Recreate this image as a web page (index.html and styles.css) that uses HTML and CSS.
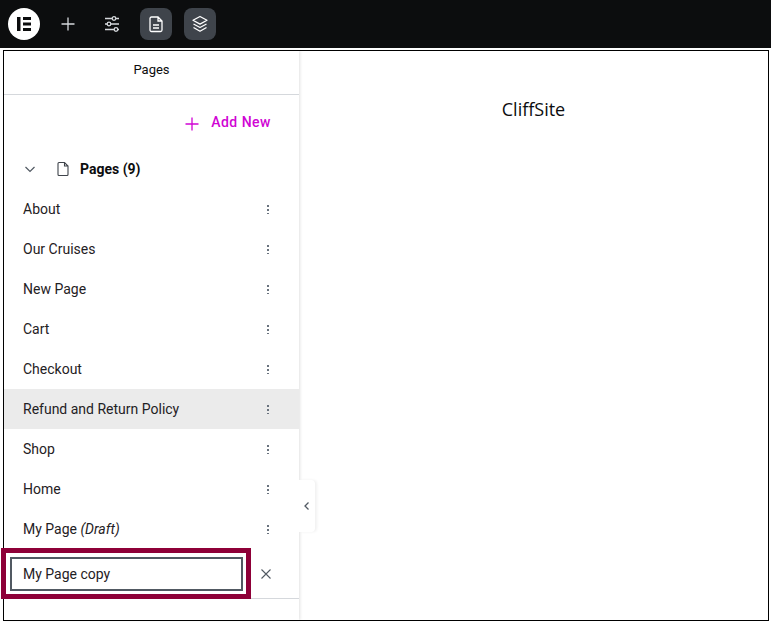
FILE: index.html
```html
<!DOCTYPE html>
<html lang="en">
<head>
  <meta charset="UTF-8">
  <title>Pages</title>
  <link rel="stylesheet" href="styles.css">
</head>
<body>

  <header class="topbar">
    <div class="logo">
      <svg width="32" height="32" viewBox="0 0 32 32"><circle cx="16" cy="16" r="16" fill="#fff"/><path d="M9 9h3.5v14H9zM15 9h8v3h-8zM15 14.500h8v3h-8zM15 20h8v3h-8z" fill="#0c0d0e"/></svg>
    </div>
    <div class="tool">
      <svg width="20" height="20" viewBox="0 0 20 20" fill="none" stroke="#d5d8dc" stroke-width="1.300"><path d="M10 3.500v13M3.500 10h13"/></svg>
    </div>
    <div class="tool">
      <svg width="20" height="20" viewBox="0 0 20 20" fill="none" stroke="#d5d8dc" stroke-width="1.300"><path d="M3 4.500h7M14 4.500h3M3 10h2M9 10h8M3 15.500h9M16 15.500h1"/><circle cx="12" cy="4.500" r="1.800"/><circle cx="7" cy="10" r="1.800"/><circle cx="14" cy="15.500" r="1.800"/></svg>
    </div>
    <div class="tool on">
      <svg width="20" height="20" viewBox="0 0 20 20" fill="none" stroke="#fff" stroke-width="1.300"><path d="M5.500 3h6.500l4 4v9a1.500 1.500 0 0 1-1.500 1.500h-9A1.500 1.500 0 0 1 4 16V4.500A1.500 1.500 0 0 1 5.500 3zM12 3v4h4M7 11h6M7 14h6"/></svg>
    </div>
    <div class="tool on">
      <svg width="20" height="20" viewBox="0 0 20 20" fill="none" stroke="#fff" stroke-width="1.300" stroke-linejoin="round"><path d="M10 2.500l7 3.800-7 3.800-7-3.800zM3.500 10l6.500 3.500 6.500-3.500M3.500 13.500l6.500 3.700 6.500-3.700"/></svg>
    </div>
  </header>

  <div class="frame">
    <aside class="sidebar">
      <div class="side-title">Pages</div>

      <div class="add-row">
        <a class="add-new">
          <svg width="18" height="18" viewBox="0 0 18 18" fill="none" stroke="#d004d4" stroke-width="1.300"><path d="M9 2.500v13M2.500 9h13"/></svg>
          <span>Add New</span>
        </a>
      </div>

      <div class="group-head">
        <svg class="chev" width="14" height="14" viewBox="0 0 14 14" fill="none" stroke="#515962" stroke-width="1.200"><path d="M2.500 5l4.500 4.500L11.500 5"/></svg>
        <svg class="page-ico" width="16" height="16" viewBox="0 0 16 16" fill="none" stroke="#3f444b" stroke-width="1.100"><path d="M4 1.500h5.500L13 5v8.500a1 1 0 0 1-1 1H4a1 1 0 0 1-1-1v-11a1 1 0 0 1 1-1zM9.500 1.500V5H13"/></svg>
        <strong>Pages (9)</strong>
      </div>

      <ul class="pages">
        <li>About<i class="dots"></i></li>
        <li>Our Cruises<i class="dots"></i></li>
        <li>New Page<i class="dots"></i></li>
        <li>Cart<i class="dots"></i></li>
        <li>Checkout<i class="dots"></i></li>
        <li class="active">Refund and Return Policy<i class="dots"></i></li>
        <li>Shop<i class="dots"></i></li>
        <li>Home<i class="dots"></i></li>
        <li><span>My Page <em>(Draft)</em></span><i class="dots"></i></li>
      </ul>

      <div class="rename-row">
        <div class="rename-input">My Page copy</div>
        <svg width="12" height="12" viewBox="0 0 12 12" fill="none" stroke="#515962" stroke-width="1.100"><path d="M1.500 1.500l9 9M10.500 1.500l-9 9"/></svg>
      </div>

      <div class="highlight"></div>
      <div class="collapse">
        <svg width="8" height="10" viewBox="0 0 8 10" fill="none" stroke="#515962" stroke-width="1.300"><path d="M5.500 1.500L2 5l3.500 3.500"/></svg>
      </div>
    </aside>

    <main class="canvas">
      <h1>CliffSite</h1>
    </main>
  </div>

</body>
</html>
```

FILE: styles.css
```css
* {
  box-sizing: border-box;
}

html, body {
  height: 100%;
}

body {
  margin: 0;
  background: #fff;
  font-family: Roboto, 'Liberation Sans', sans-serif;
  color: #0c0d0e;
  overflow: hidden;
}

/* barre du haut */
.topbar {
  height: 48px;
  background: #0c0d0e;
  display: flex;
  align-items: center;
  padding-left: 8px;
  gap: 12px;
}

.logo {
  width: 32px;
  height: 32px;
  margin-right: 0;
}

.tool {
  width: 32px;
  height: 32px;
  border-radius: 8px;
  display: flex;
  justify-content: center;
  align-items: center;
}

.tool.on {
  background: #3f444b;
}

.frame {
  margin: 2px 2px 0 3px;
  height: 571px;
  border: 1px solid #000;
  display: flex;
}

.sidebar {
  position: relative;
  width: 295px;
  flex: none;
  box-shadow: 1px 0 3px rgba(0, 0, 0, 0.12);
  z-index: 1;
  background: #fff;
}

.side-title {
  height: 44px;
  border-bottom: 1px solid #d5d8dc;
  display: flex;
  justify-content: center;
  align-items: center;
  font-size: 13px;
  padding-bottom: 6px;
}

.add-row {
  height: 54px;
  display: flex;
  justify-content: flex-end;
  align-items: center;
  padding: 0 28px 0 0;
}

.add-new {
  display: flex;
  align-items: center;
  gap: 10px;
  color: #d004d4;
  font-size: 14px;
  font-weight: 500;
  letter-spacing: 0.5px;
}

.add-new svg {
  margin-top: 3px;
}

.group-head {
  height: 40px;
  display: flex;
  align-items: center;
  padding-left: 19px;
  font-size: 14px;
}

.group-head strong {
  font-weight: 700;
  color: #0c0d0e;
}

.page-ico {
  margin-left: 18px;
  margin-right: 9px;
}

.pages {
  list-style: none;
  margin: 0;
  padding: 0;
}

.pages li {
  height: 40px;
  display: flex;
  justify-content: space-between;
  align-items: center;
  padding: 0 30px 0 19px;
  font-size: 14px;
  color: #1f2124;
}

.pages li.active {
  background: #ebebeb;
}

.pages em {
  font-style: italic;
}

/* trois points verticaux */
.dots {
  width: 2px;
  height: 10px;
  background: radial-gradient(circle, #69727d 1px, transparent 1.2px) 0 0 / 2px 4px repeat-y;
}

.rename-row {
  height: 50px;
  border-bottom: 1px solid #d5d8dc;
  display: flex;
  align-items: center;
  padding: 0 27px 0 6px;
  justify-content: space-between;
}

.rename-input {
  width: 233px;
  height: 34px;
  border: 2px solid #515962;
  display: flex;
  align-items: center;
  padding-left: 11px;
  font-size: 14px;
  color: #1f2124;
}

/* cadre d'annotation par-dessus la liste */
.highlight {
  position: absolute;
  left: -3px;
  top: 497px;
  width: 250px;
  height: 51px;
  border: 5px solid #8e0038;
  pointer-events: none;
}

.collapse {
  position: absolute;
  left: 295px;
  top: 429px;
  width: 16px;
  height: 52px;
  background: #fff;
  border-radius: 0 4px 4px 0;
  box-shadow: 2px 0 3px rgba(0, 0, 0, 0.06);
  display: flex;
  justify-content: center;
  align-items: center;
}

.canvas {
  flex: 1;
  background: #fff;
  display: flex;
  justify-content: center;
  padding-left: 0;
}

.canvas h1 {
  margin: 47px 0 0 0;
  font-family: 'Open Sans', 'Noto Sans', sans-serif;
  font-size: 18px;
  font-weight: 400;
  line-height: 22px;
  color: #0c0d0e;
}
```
